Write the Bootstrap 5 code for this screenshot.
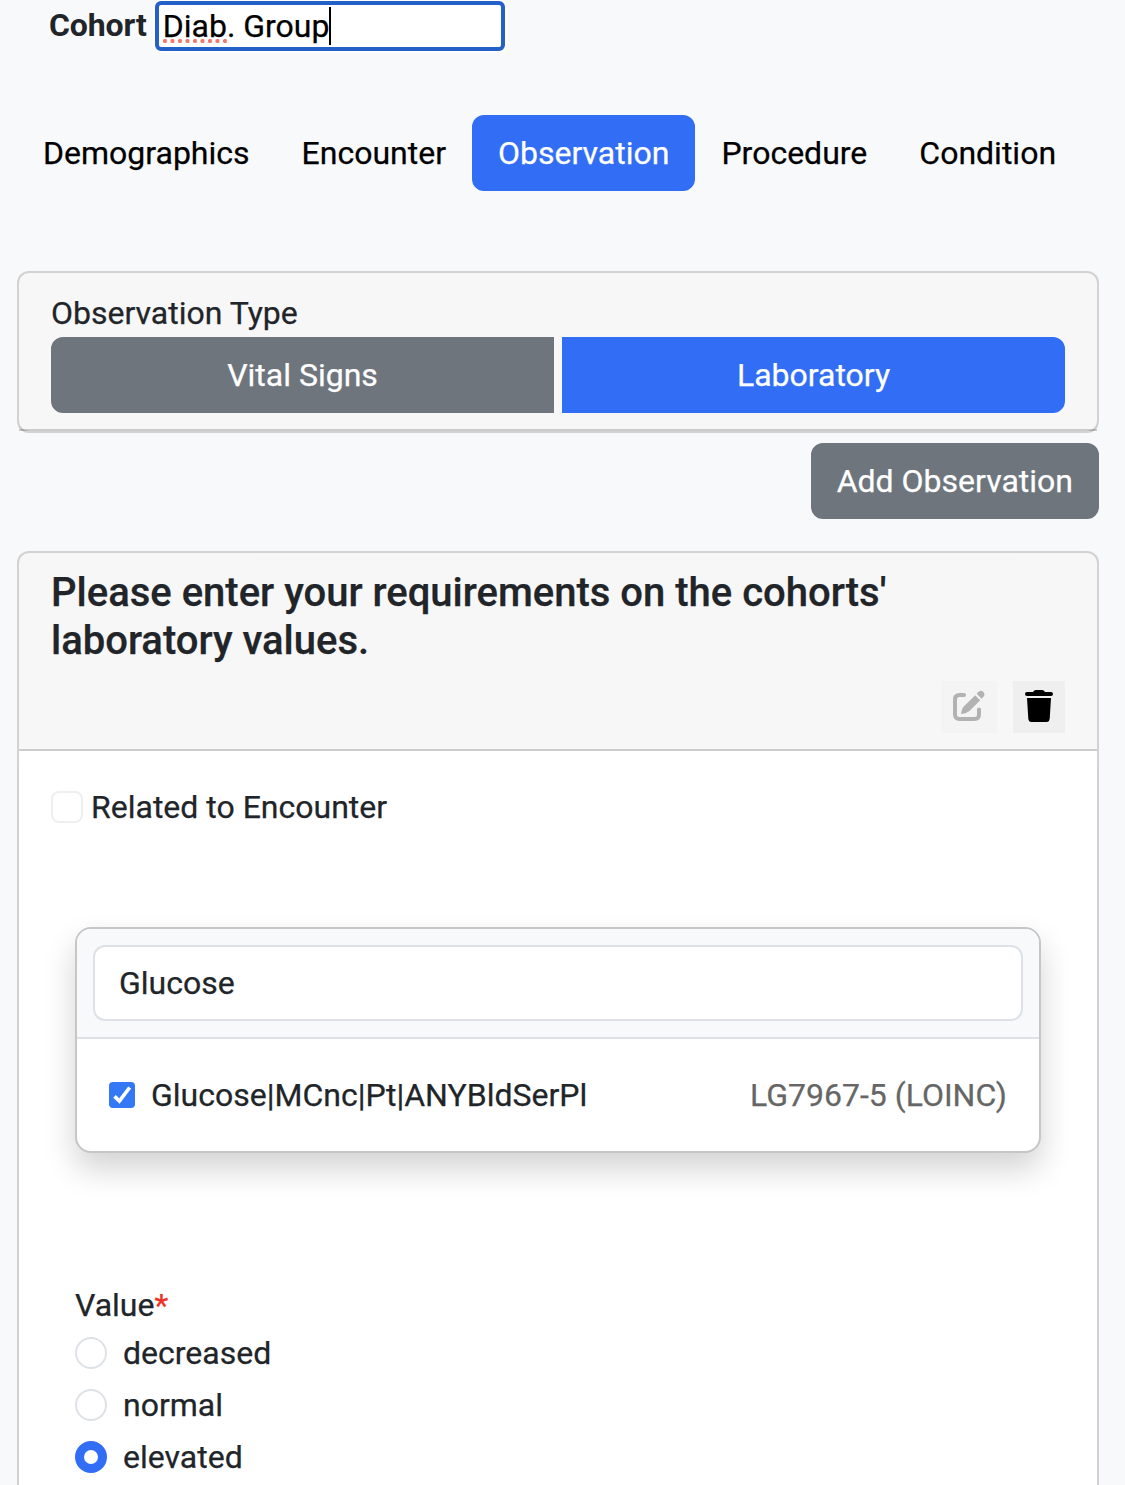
<!DOCTYPE html>
<html lang="en">
<head>
<meta charset="utf-8">
<meta name="viewport" content="width=device-width, initial-scale=1">
<title>Cohort</title>
<link href="https://cdn.jsdelivr.net/npm/bootstrap@5.3.0/dist/css/bootstrap.min.css" rel="stylesheet">
<style>
html { font-size: 32px; overflow: hidden; }
body { --bs-border-width: 2px; font-family: Roboto, sans-serif; background: #f8f9fb; color: #212529; height: 1485px; overflow: hidden; -webkit-text-stroke: .25px; }
.page { padding: 1px 26px 0 17px; }
.cohort-line { padding-left: 32px; height: 50px; }
.cohort-line label { font-weight: 700; margin-right: 8px; letter-spacing: -.1px; margin-top: -2px; -webkit-text-stroke: 0; }
.cohort-name { width: 350px; height: 50px; border: 4px solid #2360c8; border-radius: 6px; background: #fff; color: #000; padding: 0 4px; line-height: 42px; box-shadow: 0 0 0 2px #fff; white-space: pre; }
.misspelt { height: 38px; background: radial-gradient(circle at 2px 2px, #f0776c 1.8px, transparent 2.4px) 0 100% / 7.5px 4px repeat-x; }
.caret { width: 2px; height: 38px; background: #000; margin-top: 2px; }
h5 { font-weight: 500; -webkit-text-stroke: .25px; }
.btn { --bs-btn-border-width: 2px; --bs-btn-border-radius: 12px; }
.btn-primary { --bs-btn-bg: #326df6; --bs-btn-border-color: #326df6; }
.btn-secondary { --bs-btn-bg: #6e757d; --bs-btn-border-color: #6e757d; }
.tabs { margin-top: 64px; }
.tabs .btn:not(.btn-primary) { --bs-btn-color: #000; }
.card { --bs-card-border-width: 2px; --bs-card-border-color: rgba(0,0,0,.175); --bs-card-border-radius: 12px; --bs-card-inner-border-radius: 10px; --bs-card-cap-bg: rgba(0,0,0,.03); --bs-card-cap-padding-x: 32px; --bs-card-cap-padding-y: 16px; }
.type-card { margin-top: 80px; }
.type-group { gap: 8px; }
.tool { height: 52px; border: 0; background: #efefef; padding: 0; display: flex; align-items: center; justify-content: center; color: #000; }
.tool svg { margin-bottom: 2px; }
.tool-edit { width: 56px; background: #f4f4f4; color: #b2b2b2; padding-right: 2px; }
.tool-trash { width: 52px; }
.add-row { margin-top: 10px; }
.lab-card { margin-top: 32px; border-bottom: 0; border-radius: 12px 12px 0 0; height: 1000px; }
.lab-card > .card-body { padding: 32px; }
.form-check-input { --bs-border-color: #dee2e6; width: 32px; height: 32px; margin: 0; flex: none; border-width: 2px; }
.form-check-input[type=checkbox] { border-radius: 8px; border-color: #efefef; }
.form-check-input:checked { background-color: #326df6; border-color: #326df6; }
.search-card { margin: 96px 24px 0; border-radius: 16px; border: 2px solid #c6c6c6; background: #fff; box-shadow: 0 16px 32px rgba(0,0,0,.175); overflow: hidden; }
.search-top { background: #f8f9fb; border-bottom: 2px solid #dee2e6; padding: 16px; }
.search-hit { padding: 32px; gap: 16px; }
.form-control { border: 2px solid #dee2e6; border-radius: 12px; height: 76px; padding: 12px 24px; -webkit-text-stroke: .25px; }
.code { color: #666; }
.tick { flex: none; }
.value-block { margin: 128px 24px 0; }
.option { height: 48px; margin-bottom: 4px; gap: 16px; }
.star { color: #ee3124; }
</style>
</head>
<body>
<div class="page">
  <div class="cohort-line d-flex align-items-center">
    <label>Cohort</label>
    <div class="cohort-name d-flex align-items-start"><span class="misspelt">Diab</span><span>. Group</span><span class="caret"></span></div>
  </div>

  <nav class="tabs d-flex">
    <button class="btn">Demographics</button>
    <button class="btn">Encounter</button>
    <button class="btn btn-primary">Observation</button>
    <button class="btn">Procedure</button>
    <button class="btn">Condition</button>
  </nav>

  <div class="card type-card">
    <div class="card-header">
      <div>Observation Type</div>
      <div class="type-group d-flex">
        <button class="btn btn-secondary rounded-end-0 flex-fill w-50">Vital Signs</button>
        <button class="btn btn-primary rounded-start-0 flex-fill w-50">Laboratory</button>
      </div>
    </div>
  </div>

  <div class="add-row d-flex justify-content-end">
    <button class="btn btn-secondary">Add Observation</button>
  </div>

  <div class="card lab-card">
    <div class="card-header">
      <h5 class="mb-2">Please enter your requirements on the cohorts' laboratory values.</h5>
      <div class="d-flex justify-content-end gap-2">
        <button class="tool tool-edit" disabled aria-label="Edit">
          <svg width="34" height="34" viewBox="0 0 34 34" fill="none"><path d="M13 6H8.500Q4 6 4 10.500V25.500Q4 30 8.500 30H23.500Q28 30 28 25.500V20.500" stroke="currentColor" stroke-width="4" stroke-linecap="round"/><path d="M24.200 6.200L29.200 11.200L18.500 22Q15 24.700 10.200 25.200Q10.300 19.700 13.500 16.800Z" fill="currentColor"/><path d="M25.600 4.800L27.300 3Q29.500 .8 32 2.500Q34.600 5 32.500 7.700L30.600 9.800Z" fill="currentColor"/></svg>
        </button>
        <button class="tool tool-trash" aria-label="Delete">
          <svg width="28" height="32" viewBox="0 0 28 32" fill="currentColor"><path d="M2 2H8Q9 0 11 0H17Q19 0 20 2H26Q28 2 28 4T26 6H2Q0 6 0 4T2 2Z"/><path d="M2 8H26L24.700 28.500Q24.400 32 21.500 32H6.500Q3.600 32 3.300 28.500Z"/></svg>
        </button>
      </div>
    </div>
    <div class="card-body">
      <div class="d-flex align-items-center gap-1">
        <input class="form-check-input" type="checkbox" id="related">
        <label for="related">Related to Encounter</label>
      </div>

      <div class="search-card">
        <div class="search-top">
          <input class="form-control" value="Glucose" aria-label="Search">
        </div>
        <div class="search-hit d-flex align-items-center">
          <svg class="tick" width="26" height="26" viewBox="0 0 26 26"><rect width="26" height="26" rx="4" fill="#3478f6"/><path d="M5.500 14.300L10.400 19L20.700 5.500" fill="none" stroke="#fff" stroke-width="3.700"/></svg>
          <span>Glucose|MCnc|Pt|ANYBldSerPl</span>
          <span class="code ms-auto">LG7967-5 (LOINC)</span>
        </div>
      </div>

      <div class="value-block">
        <div>Value<span class="star">*</span></div>
        <div class="option d-flex align-items-center"><input class="form-check-input" type="radio" name="level" id="l1"><label for="l1">decreased</label></div>
        <div class="option d-flex align-items-center"><input class="form-check-input" type="radio" name="level" id="l2"><label for="l2">normal</label></div>
        <div class="option d-flex align-items-center"><input class="form-check-input" type="radio" name="level" id="l3" checked><label for="l3">elevated</label></div>
      </div>
    </div>
  </div>
</div>
<script src="https://cdn.jsdelivr.net/npm/bootstrap@5.3.0/dist/js/bootstrap.bundle.min.js"></script>
</body>
</html>
